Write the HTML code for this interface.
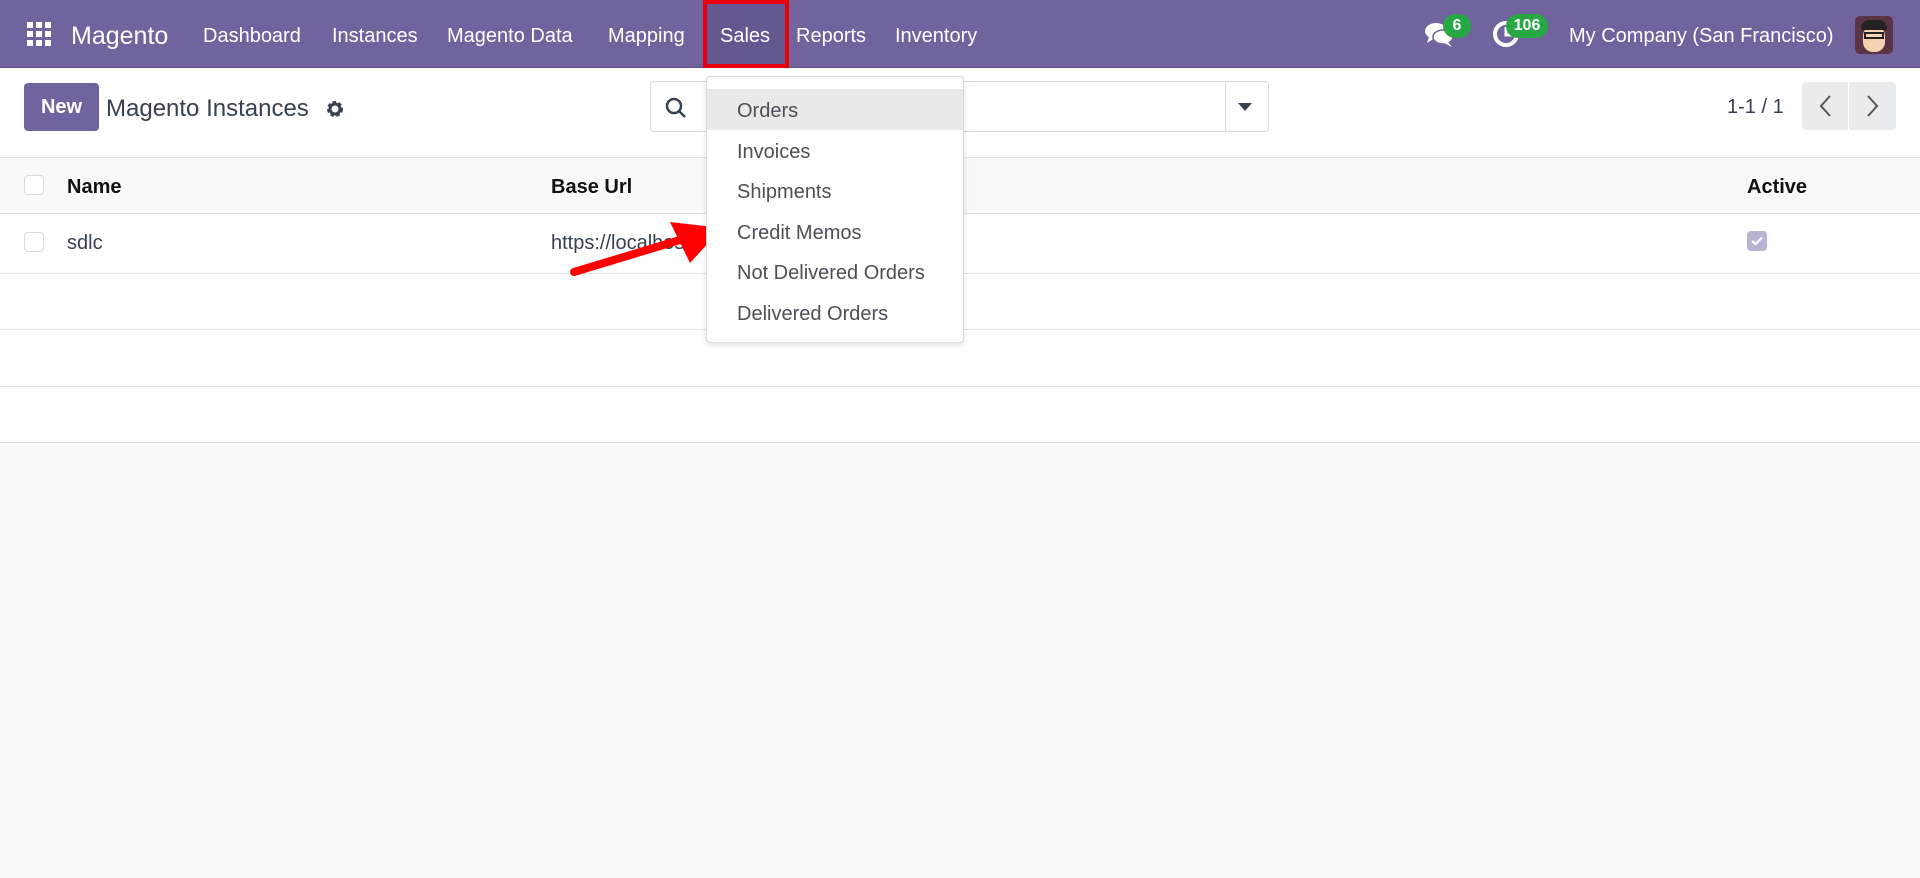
<!DOCTYPE html>
<html><head><meta charset="utf-8"><style>
*{margin:0;padding:0;box-sizing:border-box}
body{width:1920px;height:878px;overflow:hidden;background:#f9fafb;font-family:"Liberation Sans",sans-serif;color:#374151;position:relative}
.nav{position:absolute;left:0;top:0;width:1920px;height:68px;background:#71639e;border-bottom:1px solid #5e5287}
.nav span{position:absolute;top:25px;color:#fff;font-size:20px}
.abs{position:absolute}
.white{position:absolute;left:0;top:68px;width:1920px;height:374px;background:#fff}
.line{position:absolute;left:0;width:1920px;height:1px;background:#dee2e6}
.cb{position:absolute;width:20px;height:20px;border:1px solid #d8dadd;border-radius:4px;background:#fff}
.dd{position:absolute;left:706px;top:76px;width:258px;height:267px;background:#fff;border:1px solid #d8dadd;border-radius:4px;box-shadow:0 2px 6px rgba(0,0,0,.12)}
.dd div{position:absolute;left:30px;font-size:20px;color:#4b5058}
</style></head><body>
<div class="nav">
  <svg class="abs" style="left:27px;top:22px" width="24" height="24" viewBox="0 0 24 24" fill="#fff"><rect x="0" y="0" width="6" height="6"/><rect x="9" y="0" width="6" height="6"/><rect x="18" y="0" width="6" height="6"/><rect x="0" y="9" width="6" height="6"/><rect x="9" y="9" width="6" height="6"/><rect x="18" y="9" width="6" height="6"/><rect x="0" y="18" width="6" height="6"/><rect x="9" y="18" width="6" height="6"/><rect x="18" y="18" width="6" height="6"/></svg>
  <span style="left:71px;top:22px;font-size:25px">Magento</span>
  <span style="left:203px">Dashboard</span>
  <span style="left:332px">Instances</span>
  <span style="left:447px">Magento Data</span>
  <span style="left:608px">Mapping</span>
  <div class="abs" style="left:703px;top:0;width:86px;height:68px;background:#655891;border:4px solid #e8000b"></div>
  <span style="left:720px">Sales</span>
  <span style="left:796px">Reports</span>
  <span style="left:895px">Inventory</span>
  <svg class="abs" style="left:1425px;top:22px" width="30" height="26" viewBox="0 0 30 26" fill="#fff"><ellipse cx="11" cy="9" rx="11" ry="8"/><path d="M4 15 L2 21 L10 16Z"/><ellipse cx="18" cy="15" rx="10" ry="7" fill="#fff" stroke="#71639e" stroke-width="1.5"/><path d="M23 20 L27 25 L19 21Z"/></svg>
  <div class="abs" style="left:1443px;top:14px;width:28px;height:24px;border-radius:12px;background:#28a745;color:#fff;font-size:16px;font-weight:bold;text-align:center;line-height:24px">6</div>
  <svg class="abs" style="left:1492px;top:20px" width="28" height="28" viewBox="0 0 28 28"><circle cx="14" cy="14" r="11" fill="none" stroke="#fff" stroke-width="4"/><path d="M14 7V15H20" stroke="#fff" stroke-width="3" fill="none"/></svg>
  <div class="abs" style="left:1506px;top:14px;width:42px;height:24px;border-radius:12px;background:#28a745;color:#fff;font-size:16px;font-weight:bold;text-align:center;line-height:24px">106</div>
  <span style="left:1569px">My Company (San Francisco)</span>
  <div class="abs" style="left:1855px;top:16px;width:38px;height:38px;border-radius:5px;background:#5a3445;overflow:hidden"><div class="abs" style="left:8px;top:10px;width:22px;height:26px;border-radius:10px;background:#f6d4b3"></div><div class="abs" style="left:6px;top:4px;width:26px;height:10px;border-radius:8px 8px 2px 2px;background:#222"></div><div class="abs" style="left:9px;top:16px;width:20px;height:7px;border:2px solid #222"></div></div>
</div>
<div class="white"></div>
<div class="abs" style="left:24px;top:83px;width:75px;height:48px;background:#71639e;border-radius:4px;color:#fff;font-weight:bold;font-size:20px;text-align:center;line-height:48px">New</div>
<div class="abs" style="left:106px;top:95px;font-size:24px;color:#374151">Magento Instances</div>
<svg class="abs" style="left:325px;top:99px" width="20" height="20" viewBox="0 0 20 20"><circle cx="10" cy="10" r="6" fill="none" stroke="#374151" stroke-width="4" stroke-dasharray="3 2.2"/><circle cx="10" cy="10" r="5" fill="none" stroke="#374151" stroke-width="3"/></svg>
<div class="abs" style="left:650px;top:81px;width:619px;height:51px;border:1px solid #d8dadd;border-radius:4px;background:#fff"></div>
<div class="abs" style="left:1225px;top:82px;width:1px;height:49px;background:#d8dadd"></div>
<svg class="abs" style="left:1238px;top:103px" width="14" height="9"><path d="M0 0H14L7 8Z" fill="#374151"/></svg>
<svg class="abs" style="left:665px;top:97px" width="22" height="22" viewBox="0 0 22 22"><circle cx="9" cy="9" r="7" fill="none" stroke="#374151" stroke-width="2.5"/><path d="M14 14L20 20" stroke="#374151" stroke-width="2.5"/></svg>
<div class="abs" style="left:1727px;top:96px;font-size:20px;color:#374151">1-1 / 1</div>
<div class="abs" style="left:1802px;top:82px;width:46px;height:48px;background:#e9ecef;border-radius:4px 0 0 4px"></div>
<div class="abs" style="left:1849px;top:82px;width:47px;height:48px;background:#e9ecef;border-radius:0 4px 4px 0"></div>
<svg class="abs" style="left:1818px;top:94px" width="14" height="24"><path d="M12 2L3 12L12 22" stroke="#555" stroke-width="2" fill="none"/></svg>
<svg class="abs" style="left:1866px;top:94px" width="14" height="24"><path d="M2 2L11 12L2 22" stroke="#555" stroke-width="2" fill="none"/></svg>
<div class="line" style="top:157px"></div>
<div class="abs" style="left:0;top:158px;width:1920px;height:55px;background:#f8f9fa"></div>
<div class="line" style="top:213px"></div>
<div class="line" style="top:273px"></div>
<div class="line" style="top:329px"></div>
<div class="line" style="top:386px"></div>
<div class="line" style="top:442px"></div>
<div class="cb" style="left:24px;top:175px"></div>
<div class="cb" style="left:24px;top:232px"></div>
<div class="abs" style="left:67px;top:176px;font-size:20px;font-weight:bold;color:#111">Name</div>
<div class="abs" style="left:551px;top:176px;font-size:20px;font-weight:bold;color:#111">Base Url</div>
<div class="abs" style="left:1747px;top:176px;font-size:20px;font-weight:bold;color:#111">Active</div>
<div class="abs" style="left:67px;top:232px;font-size:20px">sdlc</div>
<div class="abs" style="left:551px;top:232px;font-size:20px">https://localhost</div>
<div class="abs" style="left:1747px;top:231px;width:20px;height:20px;border-radius:4px;background:#b9b2d2"></div>
<svg class="abs" style="left:1751px;top:236px" width="12" height="10"><path d="M1 5L4.5 8L11 1.5" stroke="#fff" stroke-width="2.2" fill="none"/></svg>
<svg class="abs" style="left:560px;top:215px" width="180" height="70"><path d="M14 57L120 25" stroke="#f00" stroke-width="8" stroke-linecap="round"/><path d="M162 13L110 7L130 48Z" fill="#f00"/></svg>
<div class="dd">
  <div style="left:0;top:12px;width:256px;height:41px;background:#e9e9ea"></div>
  <div style="top:23px">Orders</div>
  <div style="top:64px">Invoices</div>
  <div style="top:104px">Shipments</div>
  <div style="top:145px">Credit Memos</div>
  <div style="top:185px">Not Delivered Orders</div>
  <div style="top:226px">Delivered Orders</div>
</div>
</body></html>
